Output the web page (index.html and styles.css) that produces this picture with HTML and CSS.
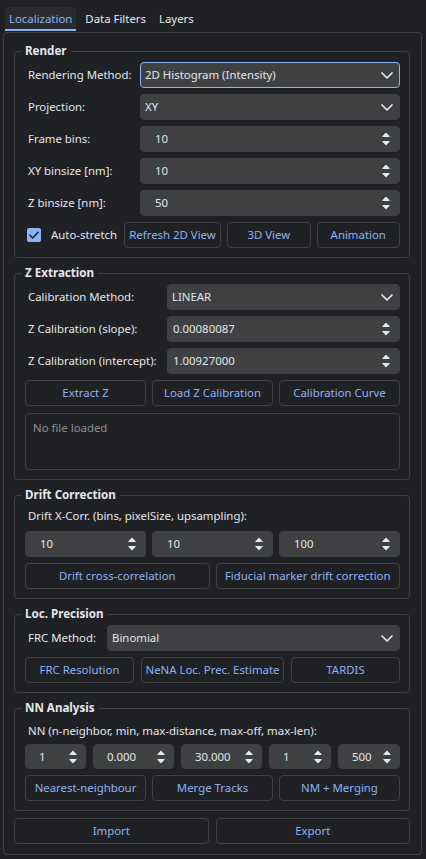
FILE: index.html
```html
<!DOCTYPE html>
<html>
<head>
<meta charset="utf-8">
<link rel="stylesheet" href="styles.css">
</head>
<body>
<div class="tabbar">
  <div class="tab active">Localization</div>
  <div class="tab">Data Filters</div>
  <div class="tab">Layers</div>
</div>
<div class="panel">
  <fieldset class="group">
    <legend>Render</legend>
    <div class="form render">
      <div class="lbl">Rendering Method:</div>
      <div class="field combo focus"><span>2D Histogram (Intensity)</span><svg class="chev" width="12" height="7" viewBox="0 0 12 7"><path d="M1 1l5 5 5-5"/></svg></div>
      <div class="lbl">Projection:</div>
      <div class="field combo"><span>XY</span><svg class="chev" width="12" height="7" viewBox="0 0 12 7"><path d="M1 1l5 5 5-5"/></svg></div>
      <div class="lbl">Frame bins:</div>
      <div class="field spin"><span>10</span><svg class="arr" width="8" height="14" viewBox="0 0 8 14"><path d="M4 0.6L7.6 4.3Q8 5 7.2 5H0.8Q0 5 0.4 4.3Z M4 13.4L7.6 9.7Q8 9 7.2 9H0.8Q0 9 0.4 9.7Z"/></svg></div>
      <div class="lbl">XY binsize [nm]:</div>
      <div class="field spin"><span>10</span><svg class="arr" width="8" height="14" viewBox="0 0 8 14"><path d="M4 0.6L7.6 4.3Q8 5 7.2 5H0.8Q0 5 0.4 4.3Z M4 13.4L7.6 9.7Q8 9 7.2 9H0.8Q0 9 0.4 9.7Z"/></svg></div>
      <div class="lbl">Z binsize [nm]:</div>
      <div class="field spin"><span>50</span><svg class="arr" width="8" height="14" viewBox="0 0 8 14"><path d="M4 0.6L7.6 4.3Q8 5 7.2 5H0.8Q0 5 0.4 4.3Z M4 13.4L7.6 9.7Q8 9 7.2 9H0.8Q0 9 0.4 9.7Z"/></svg></div>
    </div>
    <div class="checkrow">
      <div class="check"><span class="box"><svg width="14" height="14" viewBox="0 0 14 14"><path d="M3 7.2l2.8 2.8L11 4.3"/></svg></span><span>Auto-stretch</span></div>
      <div class="btn refresh">Refresh 2D View</div>
      <div class="btn">3D View</div>
      <div class="btn">Animation</div>
    </div>
  </fieldset>

  <fieldset class="group">
    <legend>Z Extraction</legend>
    <div class="form zext">
      <div class="lbl">Calibration Method:</div>
      <div class="field combo"><span>LINEAR</span><svg class="chev" width="12" height="7" viewBox="0 0 12 7"><path d="M1 1l5 5 5-5"/></svg></div>
      <div class="lbl">Z Calibration (slope):</div>
      <div class="field spin dspin"><span>0.00080087</span><svg class="arr" width="8" height="14" viewBox="0 0 8 14"><path d="M4 0.6L7.6 4.3Q8 5 7.2 5H0.8Q0 5 0.4 4.3Z M4 13.4L7.6 9.7Q8 9 7.2 9H0.8Q0 9 0.4 9.7Z"/></svg></div>
      <div class="lbl">Z Calibration (intercept):</div>
      <div class="field spin dspin"><span>1.00927000</span><svg class="arr" width="8" height="14" viewBox="0 0 8 14"><path d="M4 0.6L7.6 4.3Q8 5 7.2 5H0.8Q0 5 0.4 4.3Z M4 13.4L7.6 9.7Q8 9 7.2 9H0.8Q0 9 0.4 9.7Z"/></svg></div>
    </div>
    <div class="btns3">
      <div class="btn">Extract Z</div>
      <div class="btn">Load Z Calibration</div>
      <div class="btn">Calibration Curve</div>
    </div>
    <div class="textarea">No file loaded</div>
  </fieldset>

  <fieldset class="group">
    <legend>Drift Correction</legend>
    <div class="plain">Drift X-Corr. (bins, pixelSize, upsampling):</div>
    <div class="btns3">
      <div class="field spin"><span>10</span><svg class="arr" width="8" height="14" viewBox="0 0 8 14"><path d="M4 0.6L7.6 4.3Q8 5 7.2 5H0.8Q0 5 0.4 4.3Z M4 13.4L7.6 9.7Q8 9 7.2 9H0.8Q0 9 0.4 9.7Z"/></svg></div>
      <div class="field spin"><span>10</span><svg class="arr" width="8" height="14" viewBox="0 0 8 14"><path d="M4 0.6L7.6 4.3Q8 5 7.2 5H0.8Q0 5 0.4 4.3Z M4 13.4L7.6 9.7Q8 9 7.2 9H0.8Q0 9 0.4 9.7Z"/></svg></div>
      <div class="field spin"><span>100</span><svg class="arr" width="8" height="14" viewBox="0 0 8 14"><path d="M4 0.6L7.6 4.3Q8 5 7.2 5H0.8Q0 5 0.4 4.3Z M4 13.4L7.6 9.7Q8 9 7.2 9H0.8Q0 9 0.4 9.7Z"/></svg></div>
    </div>
    <div class="btns2">
      <div class="btn">Drift cross-correlation</div>
      <div class="btn">Fiducial marker drift correction</div>
    </div>
  </fieldset>

  <fieldset class="group">
    <legend>Loc. Precision</legend>
    <div class="form loc">
      <div class="lbl">FRC Method:</div>
      <div class="field combo"><span>Binomial</span><svg class="chev" width="12" height="7" viewBox="0 0 12 7"><path d="M1 1l5 5 5-5"/></svg></div>
    </div>
    <div class="btnsloc">
      <div class="btn">FRC Resolution</div>
      <div class="btn">NeNA Loc. Prec. Estimate</div>
      <div class="btn">TARDIS</div>
    </div>
  </fieldset>

  <fieldset class="group nn">
    <legend>NN Analysis</legend>
    <div class="plain">NN (n-neighbor, min, max-distance, max-off, max-len):</div>
    <div class="spins5">
      <div class="field spin sm"><span>1</span><svg class="arr" width="8" height="14" viewBox="0 0 8 14"><path d="M4 0.6L7.6 4.3Q8 5 7.2 5H0.8Q0 5 0.4 4.3Z M4 13.4L7.6 9.7Q8 9 7.2 9H0.8Q0 9 0.4 9.7Z"/></svg></div>
      <div class="field spin sm"><span>0.000</span><svg class="arr" width="8" height="14" viewBox="0 0 8 14"><path d="M4 0.6L7.6 4.3Q8 5 7.2 5H0.8Q0 5 0.4 4.3Z M4 13.4L7.6 9.7Q8 9 7.2 9H0.8Q0 9 0.4 9.7Z"/></svg></div>
      <div class="field spin sm"><span>30.000</span><svg class="arr" width="8" height="14" viewBox="0 0 8 14"><path d="M4 0.6L7.6 4.3Q8 5 7.2 5H0.8Q0 5 0.4 4.3Z M4 13.4L7.6 9.7Q8 9 7.2 9H0.8Q0 9 0.4 9.7Z"/></svg></div>
      <div class="field spin sm"><span>1</span><svg class="arr" width="8" height="14" viewBox="0 0 8 14"><path d="M4 0.6L7.6 4.3Q8 5 7.2 5H0.8Q0 5 0.4 4.3Z M4 13.4L7.6 9.7Q8 9 7.2 9H0.8Q0 9 0.4 9.7Z"/></svg></div>
      <div class="field spin sm"><span>500</span><svg class="arr" width="8" height="14" viewBox="0 0 8 14"><path d="M4 0.6L7.6 4.3Q8 5 7.2 5H0.8Q0 5 0.4 4.3Z M4 13.4L7.6 9.7Q8 9 7.2 9H0.8Q0 9 0.4 9.7Z"/></svg></div>
    </div>
    <div class="btns3">
      <div class="btn">Nearest-neighbour</div>
      <div class="btn">Merge Tracks</div>
      <div class="btn">NM + Merging</div>
    </div>
  </fieldset>

  <div class="bottom">
    <div class="btn">Import</div>
    <div class="btn">Export</div>
  </div>
</div>
</body>
</html>
```

FILE: styles.css
```css
* { box-sizing: border-box; }
html, body { margin: 0; padding: 0; }
body {
  background: #202124;
  color: #e4e7eb;
  font-family: "Noto Sans", "Open Sans", sans-serif;
  font-size: 11.4px;
  line-height: 16px;
  width: 426px;
  height: 859px;
  overflow: hidden;
}
.tabbar {
  display: flex;
  gap: 5px;
  padding: 7px 0 0 5px;
  height: 32px;
}
.tab {
  height: 24px;
  padding: 4px 4px 0;
  color: #e4e7eb;
}
.tab.active {
  background: #2a2b2f;
  color: #8ab4f7;
  border-bottom: 2px solid #8ab4f7;
  border-radius: 3px 3px 0 0;
}
.panel {
  margin-left: 3px;
  width: 419px;
  border: 1px solid #3f4042;
  border-radius: 4px;
  padding: 10px 11px 10px 10px;
  display: flex;
  flex-direction: column;
  gap: 7px;
}
.group {
  margin: 0;
  min-width: 0;
  border: 1px solid #3f4042;
  border-radius: 4px;
  padding: 3px 9px 9px 10px;
  display: flex;
  flex-direction: column;
  gap: 6px;
}
.group legend {
  font-weight: bold;
  padding: 0 4px;
  margin-left: -4px;
  line-height: 16px;
  font-size: 11.6px;
}
.form {
  display: grid;
  row-gap: 6px;
  align-items: center;
}
.render { grid-template-columns: 115px 1fr; }
.zext { grid-template-columns: 142px 1fr; }
.loc { grid-template-columns: 82px 1fr; }
.lbl { padding-left: 3px; white-space: nowrap; }
.plain { padding-left: 3px; height: 18px; line-height: 18px; white-space: nowrap; margin-top: 1px; }
.nn .plain { margin-top: 3px; margin-bottom: -2px; }
.nn .spins5 .field { height: 25px; }
.field {
  height: 26px;
  background: #3f4042;
  border-radius: 4px;
  display: flex;
  align-items: center;
  justify-content: space-between;
  border: 1px solid #3f4042;
}
.field.focus { border-color: #8ab4f7; }
.combo { padding: 0 6px 0 4px; }
.spin { padding: 0 9px 0 14px; }
.spin.dspin { padding-left: 5px; }
.spin.sm { padding: 0 8px 0 13px; }
.chev path { fill: none; stroke: #e4e7eb; stroke-width: 1.7; stroke-linecap: round; stroke-linejoin: round; }
.arr path { fill: #e4e7eb; }
.checkrow { display: flex; gap: 6px; height: 26px; }
.check { width: 93px; display: flex; align-items: center; gap: 10px; padding-left: 2px; white-space: nowrap; }
.box { width: 14px; height: 14px; background: #8ab4f7; border-radius: 2px; display: flex; }
.box path { fill: none; stroke: #202124; stroke-width: 1.6; stroke-linecap: round; stroke-linejoin: round; }
.btn {
  height: 26px;
  border: 1px solid #3f4042;
  border-radius: 4px;
  color: #8ab4f7;
  display: flex;
  align-items: center;
  justify-content: center;
  white-space: nowrap;
  flex: 1;
  min-width: 0;
}
.btn.refresh { flex: 0 0 97px; }
.btns3 { display: grid; grid-template-columns: 1fr 1fr 1fr; gap: 6px; }
.btns2 { display: grid; grid-template-columns: 1fr 1fr; gap: 6px; }
.btnsloc { display: grid; grid-template-columns: 109px 1fr 109px; gap: 7px; }
.spins5 { display: grid; grid-template-columns: 61fr 81fr 81fr 62fr 62fr; gap: 7px; }
.textarea {
  height: 57px;
  border: 1px solid #3f4042;
  border-radius: 4px;
  color: #8c8e91;
  padding: 6px 7px;
  margin-top: 1px;
}
.bottom { display: grid; grid-template-columns: 1fr 1fr; gap: 7px; }
```
